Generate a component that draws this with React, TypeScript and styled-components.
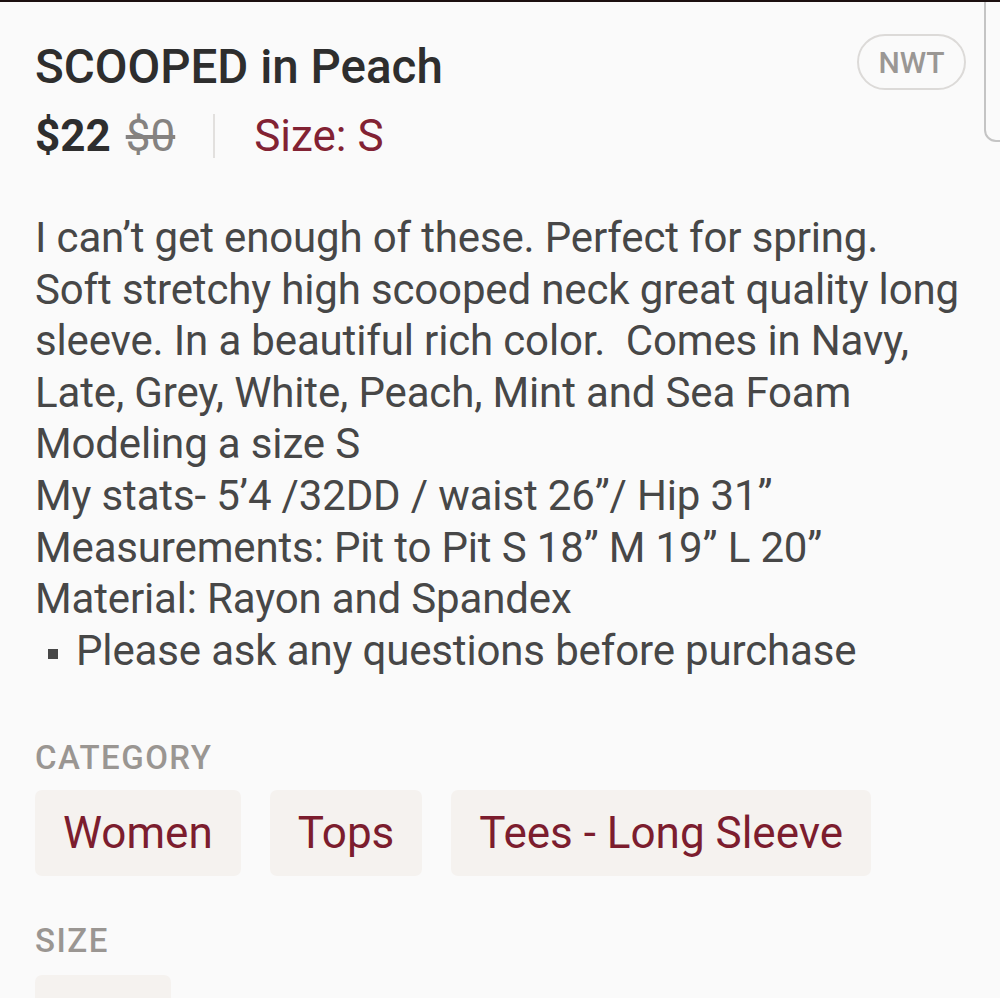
import React from 'react';
import styled, {createGlobalStyle} from 'styled-components';

const Global = createGlobalStyle`
  html, body {
    margin: 0;
    padding: 0;
    background: #fafafa;
    font-family: Roboto, "Noto Sans", sans-serif;
  }
`;

const Page = styled.div`
  position: relative;
  width: 1000px;
  height: 998px;
  overflow: hidden;
  background: #fafafa;
  border-top: 2px solid #1c1010;
  box-sizing: border-box;
  padding: 0 35px;
`;

const EdgeTab = styled.div`
  position: absolute;
  top: -10px;
  right: -20px;
  width: 32px;
  height: 146px;
  border: 2px solid #c4c4c4;
  border-radius: 12px;
  background: #fafafa;
`;

const Header = styled.header`
  display: flex;
  justify-content: space-between;
  align-items: flex-start;
  padding-top: 33px;
`;

const Title = styled.h1`
  margin: 0;
  font-size: 47.5px;
  line-height: 64px;
  font-weight: 500;
  color: #2e2e2e;
`;

const Condition = styled.span`
  margin-top: -1px;
  margin-right: -1px;
  display: inline-flex;
  align-items: center;
  justify-content: center;
  width: 109px;
  height: 56px;
  border: 2px solid #dcdad8;
  border-radius: 28px;
  box-sizing: border-box;
  font-size: 30px;
  font-weight: 500;
  color: #9a9794;
`;

const PriceRow = styled.div`
  display: flex;
  align-items: center;
  margin-top: 8px;
  height: 58px;
`;

const Price = styled.span`
  font-size: 44px;
  font-weight: 700;
  color: #2e2e2e;
`;

const OldPrice = styled.s`
  margin-left: 15px;
  font-size: 44px;
  color: #858280;
`;

const Divider = styled.span`
  width: 2px;
  height: 44px;
  background: #e2e0de;
  margin: 0 39px 0 38px;
`;

const SizeText = styled.span`
  font-size: 44px;
  color: #822233;
`;

const Description = styled.div`
  margin-top: 47px;
  font-size: 42px;
  line-height: 51.6px;
  color: #474747;
  letter-spacing: -0.15px;
`;

const Line = styled.div`
  white-space: nowrap;
`;

const Bullet = styled.span`
  display: inline-block;
  width: 10px;
  height: 10px;
  background: #474747;
  margin: 0 18px 0 13px;
  vertical-align: 6px;
`;

const Label = styled.div<{$top: number}>`
  margin-top: ${p => p.$top}px;
  font-size: 33px;
  font-weight: 500;
  letter-spacing: 1.5px;
  color: #9a9692;
  line-height: 36px;
`;

const Tags = styled.div<{$top: number}>`
  display: flex;
  gap: 29px;
  margin-top: ${p => p.$top}px;
`;

const Tag = styled.span<{$w?: number}>`
  display: inline-flex;
  align-items: center;
  justify-content: center;
  height: 86px;
  padding: 0 28px;
  min-width: ${p => p.$w ? `${p.$w}px` : 'auto'};
  box-sizing: border-box;
  border-radius: 7px;
  background: #f5f2ef;
  font-size: 44px;
  color: #7c1d2e;
`;

const lines = [
  'I can\u2019t get enough of these. Perfect for spring.',
  'Soft stretchy high scooped neck great quality long',
  'sleeve. In a beautiful rich color.\u00a0 Comes in Navy,',
  'Late, Grey, White, Peach, Mint and Sea Foam',
  'Modeling a size S',
  'My stats- 5\u20194 /32DD / waist 26\u201d/ Hip 31\u201d',
  'Measurements: Pit to Pit S 18\u201d M 19\u201d L 20\u201d',
  'Material: Rayon and Spandex',
];

function App() {
  return (
    <Page>
      <Global/>
      <EdgeTab/>
      <Header>
        <div>
          <Title>SCOOPED in Peach</Title>
          <PriceRow>
            <Price>$22</Price>
            <OldPrice>$0</OldPrice>
            <Divider/>
            <SizeText>Size: S</SizeText>
          </PriceRow>
        </div>
        <Condition>NWT</Condition>
      </Header>
      <Description>
        {lines.map(l => <Line key={l}>{l}</Line>)}
        <Line><Bullet/>Please ask any questions before purchase</Line>
      </Description>
      <Label $top={64}>CATEGORY</Label>
      <Tags $top={14}>
        <Tag>Women</Tag>
        <Tag>Tops</Tag>
        <Tag>Tees - Long Sleeve</Tag>
      </Tags>
      <Label $top={47}>SIZE</Label>
      <Tags $top={16}>
        <Tag $w={136}>&nbsp;</Tag>
      </Tags>
    </Page>
  );
}

export default App;
